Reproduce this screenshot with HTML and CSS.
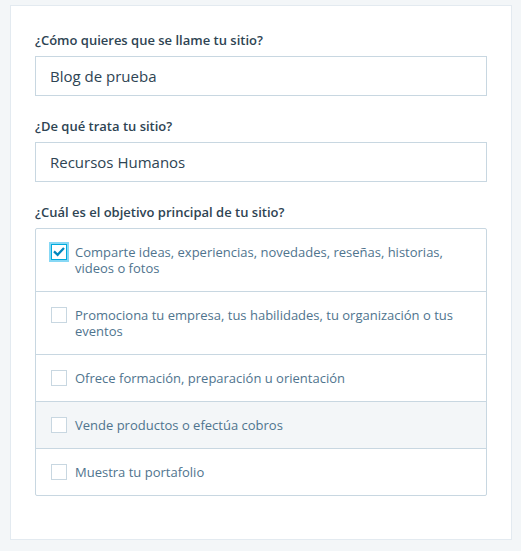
FILE: index.html
```html
<!DOCTYPE html>
<html lang="es">
<head>
<meta charset="utf-8">
<link rel="stylesheet" href="styles.css">
</head>
<body>
<div class="card">
  <div class="field">
    <label class="label">¿Cómo quieres que se llame tu sitio?</label>
    <div class="input">Blog de prueba</div>
  </div>
  <div class="field">
    <label class="label">¿De qué trata tu sitio?</label>
    <div class="input">Recursos Humanos</div>
  </div>
  <div class="field">
    <label class="label">¿Cuál es el objetivo principal de tu sitio?</label>
    <div class="list">
      <div class="row">
        <span class="box checked"><svg viewBox="0 0 16 16" width="14" height="14"><path d="M3.2 8.2 L6.4 11.2 L12.8 4.4" fill="none" stroke="#0087be" stroke-width="2.6" stroke-linecap="square"/></svg></span>
        <span class="text">Comparte ideas, experiencias, novedades, reseñas, historias, videos o fotos</span>
      </div>
      <div class="row">
        <span class="box"></span>
        <span class="text">Promociona tu empresa, tus habilidades, tu organización o tus eventos</span>
      </div>
      <div class="row">
        <span class="box"></span>
        <span class="text">Ofrece formación, preparación u orientación</span>
      </div>
      <div class="row hover">
        <span class="box"></span>
        <span class="text">Vende productos o efectúa cobros</span>
      </div>
      <div class="row">
        <span class="box"></span>
        <span class="text">Muestra tu portafolio</span>
      </div>
    </div>
  </div>
</div>
</body>
</html>
```
FILE: styles.css
```css
html, body {
  margin: 0;
  padding: 0;
  background: #f3f6f8;
}
body {
  padding: 5px 9px 0 10px;
  font-family: "Open Sans", "Noto Sans", sans-serif;
  color: #2e4453;
}
.card {
  width: 502px;
  height: 535px;
  box-sizing: border-box;
  background: #fff;
  border: 1px solid #e3eaf0;
  padding: 25px 24px 0 24px;
}
.field {
  display: flex;
  flex-direction: column;
  margin-bottom: 21px;
}
.label {
  font-size: 13px;
  font-weight: 600;
  line-height: 18px;
  color: #2e4453;
  margin-bottom: 7px;
}
.input {
  height: 40px;
  box-sizing: border-box;
  border: 1px solid #c8d7e1;
  padding: 0 14px;
  font-size: 15px;
  line-height: 38px;
  color: #2e4453;
}
.list {
  border: 1px solid #c8d7e1;
  border-radius: 2px;
}
.row {
  display: flex;
  align-items: flex-start;
  gap: 8px;
  padding: 15px 16px 15px 15px;
  border-top: 1px solid #c8d7e1;
  font-size: 13px;
  line-height: 16px;
  color: #4f748e;
}
.row:first-child {
  border-top: none;
}
.row.hover {
  background: #f3f6f8;
}
.box {
  flex: none;
  width: 16px;
  height: 16px;
  box-sizing: border-box;
  border: 1px solid #c8d7e1;
  background: #fff;
  display: flex;
  align-items: center;
  justify-content: center;
}
.box.checked {
  border-color: #00aadc;
  box-shadow: 0 0 0 2px #87d8f5;
}
.text {
  flex: 1;
}
```
